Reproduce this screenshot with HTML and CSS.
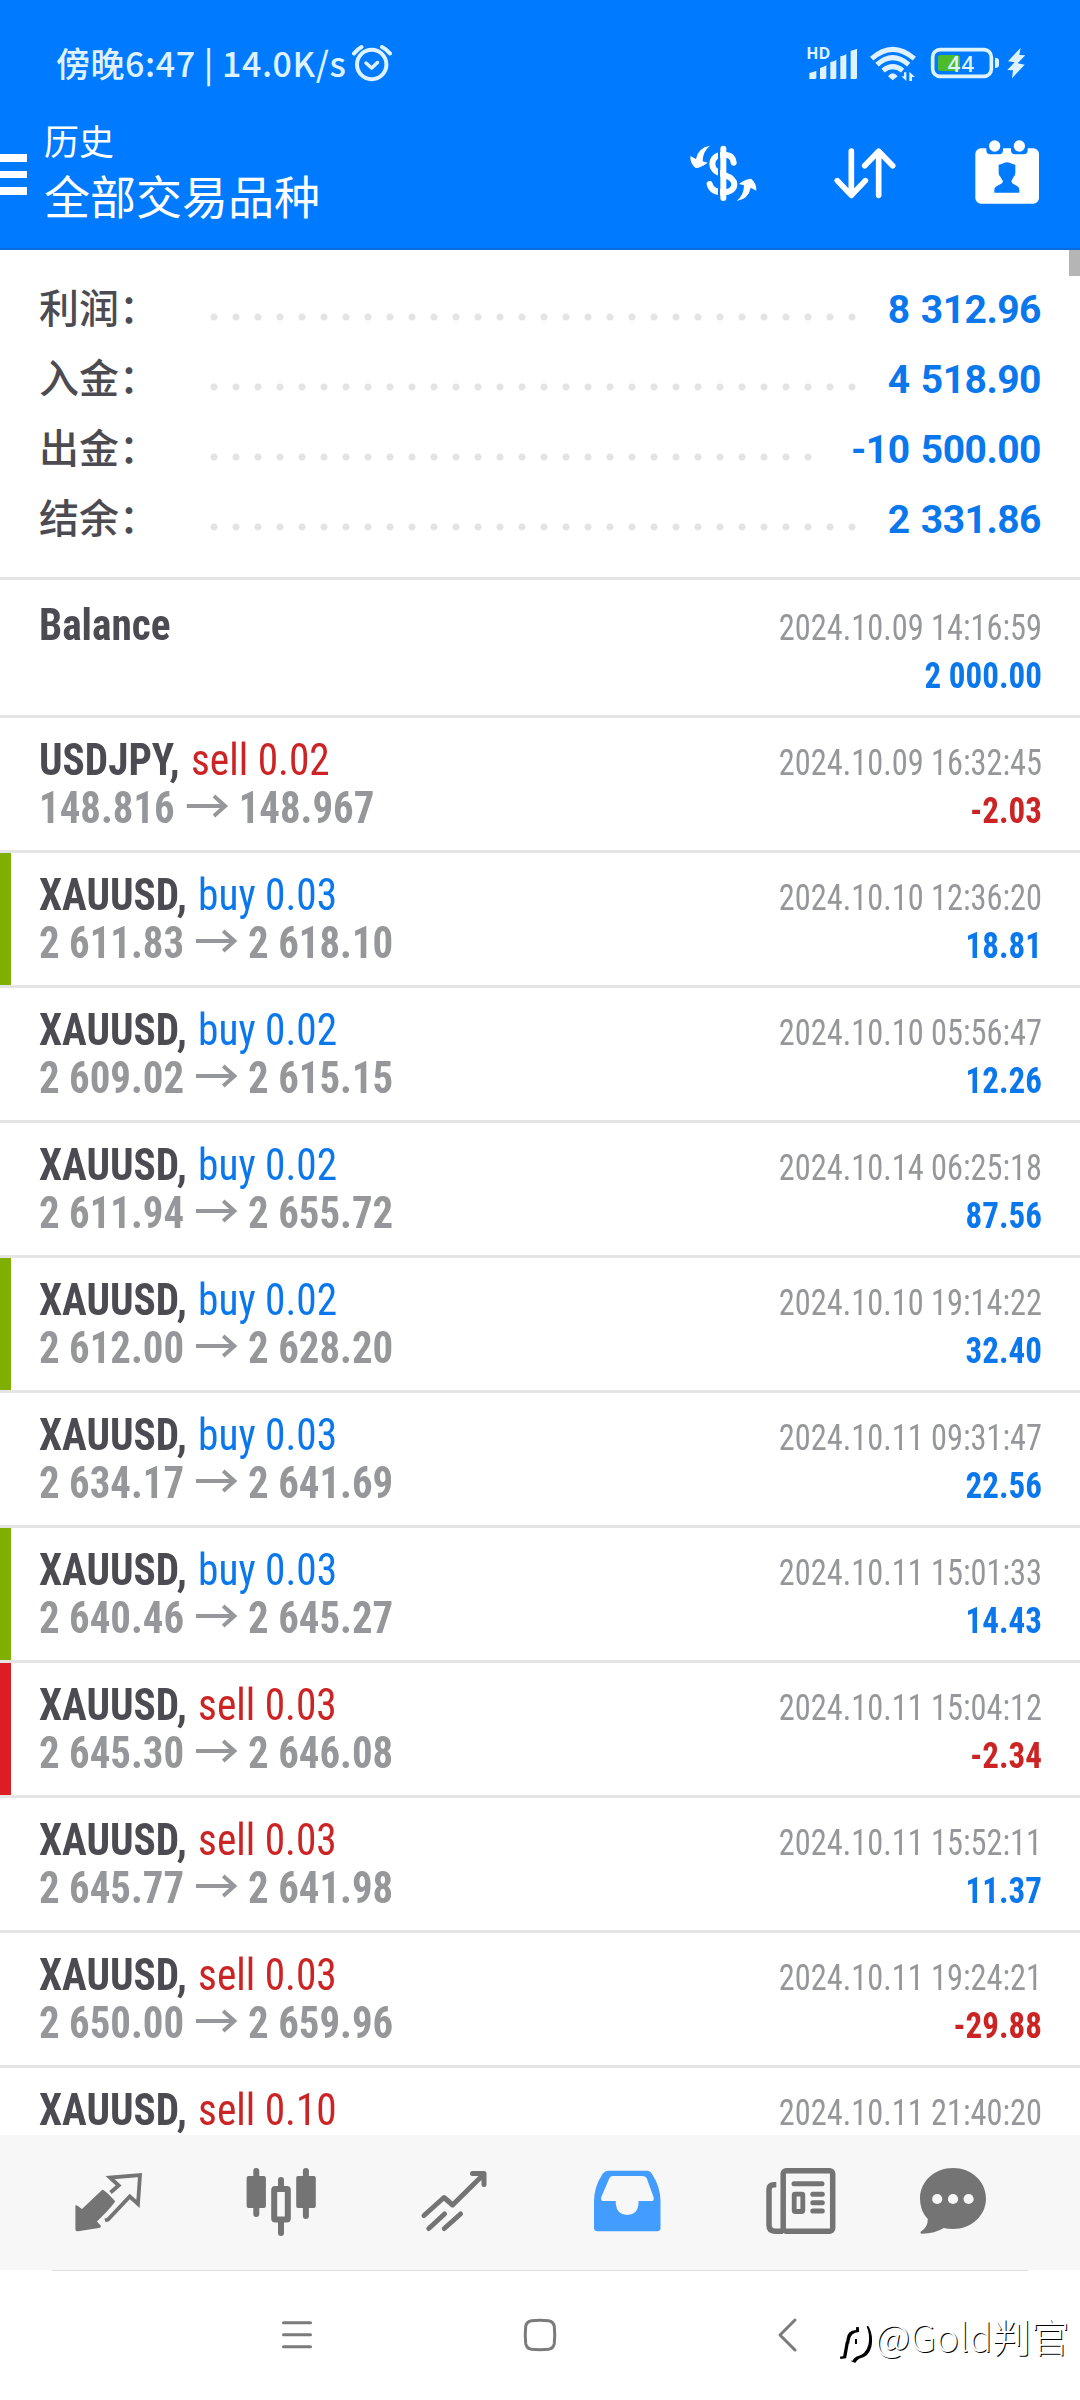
FILE: index.html
```html
<!DOCTYPE html>
<html lang="zh-CN">
<head>
<meta charset="utf-8">
<title>历史</title>
<link rel="stylesheet" href="styles.css">
</head>
<body>
<svg width="0" height="0" class="defs">
  <symbol id="arrow" viewBox="0 0 45 24">
    <path d="M0 12H42M29.500 2L41.500 12L29.500 22" fill="none" stroke="currentColor" stroke-width="4.200"/>
  </symbol>
</svg>

<header class="header">
  <div class="status">
    <div class="status-left">
      <span class="clock">傍晚6:47 | 14.0K/s</span>
      <svg class="alarm" viewBox="0 0 40 38" fill="none" stroke="currentColor" stroke-width="4">
        <circle cx="19.700" cy="20.500" r="14.700"/>
        <path d="M14 19L19.700 24L25.500 18.500" stroke-width="3.500" stroke-linecap="round" stroke-linejoin="round"/>
        <path d="M2 9.500Q5 5.500 9.500 3M30 3Q35 5.500 38 9.500" stroke-linecap="round"/>
      </svg>
    </div>
    <svg class="status-right" viewBox="438 126 660 123" fill="currentColor">
      <text x="439" y="177" class="hd">HD</text>
      <path d="M448 237V219Q460 216 469 212V234L466 237ZM480 237V204Q491 201 499 196V234L496 237ZM511 237V186Q522 184 529 179V234L526 237ZM541 237V169Q552 167 559 162V234L556 237ZM572 237V152Q582 150 591 146V234L588 237Z"/>
      <g fill="none" stroke="currentColor" stroke-width="15">
        <path d="M635 176Q698 120 763 176"/>
        <path d="M651 194Q698 152 746 194"/>
        <path d="M669 212Q698 188 728 212"/>
      </g>
      <path d="M684 229Q698 210 713 229L698 241ZM739 217V243L724 229H732V217ZM748 243V215L765 231H756V243Z"/>
      <rect x="818" y="149" width="176" height="80" rx="22" fill="none" stroke="currentColor" stroke-width="11"/>
      <path d="M1005 173Q1017 173 1017 182V195Q1017 204 1005 204Z"/>
      <rect x="834" y="165" width="66" height="48" rx="8" fill="#4cbb2c"/>
      <text x="863" y="215" class="charge">44</text>
      <path d="M1082 143L1044 184L1064 187L1042 210L1059 211L1056 235L1094 194L1073 190L1096 166L1078 165Z"/>
    </svg>
  </div>
  <div class="appbar">
    <div class="menu"><i></i><i></i><i></i></div>
    <div class="titles">
      <div class="title">历史</div>
      <div class="subtitle">全部交易品种</div>
    </div>
    <div class="actions">
      <svg viewBox="80 410 210 210" fill="none" stroke="#fff">
        <path d="M217 487C214 464 200 463 186 463C166 463 153 474 153 491C153 511 172 518 190 524C210 531 219 540 219 552C219 568 205 576 186 576C165 576 149 569 145 551" stroke-width="18" stroke-linecap="round"/>
        <path d="M173 440V600" stroke="#007aff" stroke-width="6"/>
        <path d="M186 445V593" stroke-width="18" stroke-linecap="round"/>
        <g fill="#fff" stroke="none">
          <path id="swoosh" d="M146 436Q110 442 104 476L87 467Q86 490 103 503Q120 502 139 487L124 483Q124 454 146 436Z"/>
          <use href="#swoosh" transform="rotate(180 186 519)"/>
        </g>
      </svg>
      <svg viewBox="510 410 210 210" fill="none" stroke="#fff" stroke-width="17" stroke-linecap="round" stroke-linejoin="round">
        <path d="M574 452V584M532 541L574 585L616 541M656 585V454M614 496L656 453L698 496"/>
      </svg>
      <svg viewBox="935 410 210 210">
        <rect x="945" y="444" width="191" height="166" rx="17" fill="#fff"/>
        <path d="M978 440H1028V450Q1028 462 1016 462H990Q978 462 978 450ZM1052 440H1102V450Q1102 462 1090 462H1064Q1052 462 1052 450Z" fill="#007aff"/>
        <circle cx="1003" cy="437" r="17" fill="#fff"/>
        <circle cx="1077" cy="437" r="17" fill="#fff"/>
        <path d="M1024 491Q1040 481 1056 491L1065 493V518Q1065 524 1060 529L1053 543Q1054 550 1066 555Q1077 560 1077 568V577H1002V568Q1002 560 1014 555Q1027 550 1028 543L1020 529Q1015 524 1015 518V493Z" fill="#007aff"/>
      </svg>
    </div>
  </div>
</header>

<main class="history">
  <div class="scrollbar"></div>
  <section class="summary">
    <div class="sum"><span class="label">利润：</span><span class="dots"></span><b>8 312.96</b></div>
    <div class="sum"><span class="label">入金：</span><span class="dots"></span><b>4 518.90</b></div>
    <div class="sum"><span class="label">出金：</span><span class="dots"></span><b>-10 500.00</b></div>
    <div class="sum"><span class="label">结余：</span><span class="dots"></span><b>2 331.86</b></div>
  </section>

  <div class="deal balance">
    <div class="info"><div class="name"><b>Balance</b></div></div>
    <div class="result"><div class="date">2024.10.09 14:16:59</div><div class="amount up">2 000.00</div></div>
  </div>
  <div class="deal">
    <div class="info"><div class="name"><b>USDJPY,</b> <span class="down">sell 0.02</span></div><div class="prices">148.816<svg class="to"><use href="#arrow"/></svg>148.967</div></div>
    <div class="result"><div class="date">2024.10.09 16:32:45</div><div class="amount down">-2.03</div></div>
  </div>
  <div class="deal tp">
    <div class="info"><div class="name"><b>XAUUSD,</b> <span class="up">buy 0.03</span></div><div class="prices">2 611.83<svg class="to"><use href="#arrow"/></svg>2 618.10</div></div>
    <div class="result"><div class="date">2024.10.10 12:36:20</div><div class="amount up">18.81</div></div>
  </div>
  <div class="deal">
    <div class="info"><div class="name"><b>XAUUSD,</b> <span class="up">buy 0.02</span></div><div class="prices">2 609.02<svg class="to"><use href="#arrow"/></svg>2 615.15</div></div>
    <div class="result"><div class="date">2024.10.10 05:56:47</div><div class="amount up">12.26</div></div>
  </div>
  <div class="deal">
    <div class="info"><div class="name"><b>XAUUSD,</b> <span class="up">buy 0.02</span></div><div class="prices">2 611.94<svg class="to"><use href="#arrow"/></svg>2 655.72</div></div>
    <div class="result"><div class="date">2024.10.14 06:25:18</div><div class="amount up">87.56</div></div>
  </div>
  <div class="deal tp">
    <div class="info"><div class="name"><b>XAUUSD,</b> <span class="up">buy 0.02</span></div><div class="prices">2 612.00<svg class="to"><use href="#arrow"/></svg>2 628.20</div></div>
    <div class="result"><div class="date">2024.10.10 19:14:22</div><div class="amount up">32.40</div></div>
  </div>
  <div class="deal">
    <div class="info"><div class="name"><b>XAUUSD,</b> <span class="up">buy 0.03</span></div><div class="prices">2 634.17<svg class="to"><use href="#arrow"/></svg>2 641.69</div></div>
    <div class="result"><div class="date">2024.10.11 09:31:47</div><div class="amount up">22.56</div></div>
  </div>
  <div class="deal tp">
    <div class="info"><div class="name"><b>XAUUSD,</b> <span class="up">buy 0.03</span></div><div class="prices">2 640.46<svg class="to"><use href="#arrow"/></svg>2 645.27</div></div>
    <div class="result"><div class="date">2024.10.11 15:01:33</div><div class="amount up">14.43</div></div>
  </div>
  <div class="deal sl">
    <div class="info"><div class="name"><b>XAUUSD,</b> <span class="down">sell 0.03</span></div><div class="prices">2 645.30<svg class="to"><use href="#arrow"/></svg>2 646.08</div></div>
    <div class="result"><div class="date">2024.10.11 15:04:12</div><div class="amount down">-2.34</div></div>
  </div>
  <div class="deal">
    <div class="info"><div class="name"><b>XAUUSD,</b> <span class="down">sell 0.03</span></div><div class="prices">2 645.77<svg class="to"><use href="#arrow"/></svg>2 641.98</div></div>
    <div class="result"><div class="date">2024.10.11 15:52:11</div><div class="amount up">11.37</div></div>
  </div>
  <div class="deal">
    <div class="info"><div class="name"><b>XAUUSD,</b> <span class="down">sell 0.03</span></div><div class="prices">2 650.00<svg class="to"><use href="#arrow"/></svg>2 659.96</div></div>
    <div class="result"><div class="date">2024.10.11 19:24:21</div><div class="amount down">-29.88</div></div>
  </div>
  <div class="deal">
    <div class="info"><div class="name"><b>XAUUSD,</b> <span class="down">sell 0.10</span></div></div>
    <div class="result"><div class="date">2024.10.11 21:40:20</div></div>
  </div>
</main>

<nav class="tabs">
  <svg viewBox="0 0 173 135">
    <path d="M53.400 70.500Q54 69 60 74L80.300 54.700Q82 54 93 66Q93.500 68 75 86.500L79 91Q79 92.500 77 93L56 96.300Q53.400 96.300 53.400 94Z" fill="currentColor"/>
    <path d="M88.500 57.500L96.700 50.500L88 42.500L118 40L116 69L107.800 61.500L86 84.500L83 85.500" fill="none" stroke="currentColor" stroke-width="3.800"/>
  </svg>
  <svg viewBox="0 0 173 135" stroke="currentColor" stroke-linecap="round" stroke-width="6">
    <g fill="currentColor" stroke="none">
      <rect x="51.600" y="41" width="19.300" height="32" rx="2"/>
      <rect x="101.200" y="41" width="19.600" height="32" rx="2"/>
    </g>
    <path d="M61.300 36V79M110.900 36V81M86 45V53M86 85V98"/>
    <rect x="79.200" y="54" width="13.600" height="30.500" rx="1" fill="#f7f7f7"/>
  </svg>
  <svg viewBox="0 0 173 135" fill="none" stroke="currentColor" stroke-linecap="round" stroke-linejoin="round" stroke-width="5">
    <path d="M56 80.500L76 62.500L84.600 70L115.500 39.500M104.500 38.500H116V49.500M60.800 93.500L76.500 79M76.300 93.500L92.500 79"/>
  </svg>
  <svg viewBox="0 0 173 135" class="active">
    <path fill="currentColor" fill-rule="evenodd" d="M67 35.700H106Q109 35.700 111 39Q119.500 52 119.500 66V93Q119.500 96.300 116 96.300H56.500Q53 96.300 53 93V66Q53 52 61.500 39Q64 35.700 67 35.700ZM72 41Q69 41 68 44L60.300 62Q59.500 66 62 66H74.800V69Q76 80 86.200 80Q96.500 80 97.500 69V66H111Q113.500 66 112.500 62L106 44Q105 41 101 41Z"/>
  </svg>
  <svg viewBox="0 0 173 135" fill="none" stroke="currentColor" stroke-width="5.500">
    <rect x="69.200" y="35.800" width="49.500" height="60.400" rx="3"/>
    <path d="M62.300 49.700H60Q55 49.700 55 54.500V90Q55 96 61 96.200H69"/>
    <path d="M80 48.700H108M98.800 59.300H108.300M98.800 67.700H108.300M98.800 76H108.300" stroke-width="5" stroke-linecap="round"/>
    <rect x="80.200" y="59.200" width="8.600" height="17.300" rx="1" stroke-width="4.800"/>
  </svg>
  <svg viewBox="0 0 173 135">
    <path fill="currentColor" d="M66 33C84 33 99 46 99 63.500C99 81 84 94 66 94Q61 94 56.800 93Q48 98.500 35 98.700Q32.500 98.500 34 96.500Q41 92 40.800 84Q33 76 33 63.500C33 46 48 33 66 33Z"/>
    <g fill="#f7f7f7"><circle cx="50.200" cy="64" r="5.100"/><circle cx="66" cy="64" r="5.100"/><circle cx="81.600" cy="64" r="5.100"/></g>
  </svg>
</nav>

<footer class="sysnav">
  <div class="divider"></div>
  <svg viewBox="0 0 36 36"><path d="M4.500 5.700H31.500M4.500 17.700H31.500M4.500 29.700H31.500"/></svg>
  <svg viewBox="0 0 36 36"><path d="M9.500 3.700Q18 2.800 26.500 3.700Q31.500 4.500 32.300 9.500Q33.200 18 32.300 26.500Q31.500 31.500 26.500 32.300Q18 33.200 9.500 32.300Q4.500 31.500 3.700 26.500Q2.800 18 3.700 9.500Q4.500 4.500 9.500 3.700Z"/></svg>
  <svg viewBox="0 0 36 36"><path d="M30 3L15 18L30 33" stroke-linejoin="round"/></svg>
  <div class="watermark">
    <svg viewBox="0 0 36 42">
      <path d="M3 33.500L7 33L9.500 19M4.500 18H10Q11 7 22 6.500M18 18.500H20M29 4Q34 12 32 23Q30 32 21 33.500Q18 35 16 39"/>
    </svg><span>@Gold判官</span>
  </div>
</footer>
</body>
</html>
```
FILE: styles.css
```css
* { box-sizing: border-box; }

body {
  margin: 0;
  width: 1080px;
  height: 2400px;
  overflow: hidden;
  display: flex;
  flex-direction: column;
  background: #fff;
  font-family: Roboto, "Noto Sans CJK SC", sans-serif;
  color: #4c4b52;
}

.defs { position: absolute; }

/* Header */
.header {
  flex: none;
  height: 250px;
  background: #007aff;
  border-bottom: 2px solid #0c6bda;
  color: #fff;
}

.status {
  height: 116px;
  padding: 42px 54px 0 56px;
  display: flex;
  justify-content: space-between;
  align-items: flex-start;
  color: #dff2ff;
}
.status-left { display: flex; }
.clock {
  font: 500 34px/42px "Noto Sans CJK SC", sans-serif;
  letter-spacing: 0.550px;
  white-space: pre;
}
.alarm { width: 40px; height: 38px; margin: 2px 0 0 6px; }
.status-right { width: 220px; height: 41px; }
.hd { font: 700 48px "Open Sans", sans-serif; }
.charge { font: 600 66px "Open Sans", sans-serif; letter-spacing: 4px; }

.appbar { display: flex; height: 132px; }
.menu {
  width: 27px;
  padding-top: 38px;
  display: flex;
  flex-direction: column;
  gap: 9px;
}
.menu i { height: 7.500px; background: #fff; }
.titles {
  flex: 1;
  padding-left: 17px;
  font-family: "Noto Sans CJK SC", sans-serif;
}
.title { font-size: 35px; line-height: 48px; }
.subtitle { font-size: 46px; line-height: 61px; }
.actions { display: flex; gap: 72px; padding: 21px 38px 0 0; }
.actions svg { width: 70px; height: 70px; }

/* Account summary */
.history { flex: 1; min-height: 0; overflow: hidden; position: relative; }
.scrollbar {
  position: absolute;
  right: 0;
  top: 0;
  width: 11px;
  height: 26px;
  background: #b5b5b5;
}
.summary {
  height: 330px;
  padding: 24px 39px 0;
  border-bottom: 3px solid #e5e5e5;
}
.sum { display: flex; align-items: center; height: 70px; }
.label {
  width: 164px;
  height: 70px;
  font: 500 40px/64px "Noto Sans CJK SC", sans-serif;
}
.dots {
  flex: 1;
  height: 8px;
  margin: 15px 29px 0 0;
  background: radial-gradient(circle at center, #e4e4e4 3.200px, transparent 3.900px) 0 0 / 22px 8px repeat-x;
}
.sum b {
  height: 70px;
  font: 700 39px/72px Roboto, sans-serif;
  letter-spacing: -0.500px;
  word-spacing: 2px;
  color: #0a78ec;
}

/* Deals */
.deal {
  height: 135px;
  padding: 18px 38px 0 39px;
  display: flex;
  justify-content: space-between;
  border-bottom: 3px solid #e5e5e5;
  font: 44px/48px "Roboto Condensed", Roboto, sans-serif;
  white-space: nowrap;
}
.balance { height: 138px; padding-top: 21px; }
.tp { background: linear-gradient(#7fb000, #7fb000) 0 0 / 11px 100% no-repeat; }
.sl { background: linear-gradient(#de1c24, #de1c24) 0 0 / 11px 100% no-repeat; }

/* Text is set narrower than the condensed face */
.name, .prices { transform-origin: 0 50%; }
.date, .amount { transform-origin: 100% 50%; }
.name { transform: scaleX(0.938); }
.name b { font-weight: 700; }
.name span { margin-left: 2px; }
.prices {
  display: flex;
  font-weight: 700;
  color: #96979b;
  transform: scaleX(0.928);
}
.to { width: 45px; height: 24px; margin: 10px 11px 0 13px; }
.result { padding-top: 3px; font-size: 36px; text-align: right; }
.date { color: #96979b; transform: scaleX(0.898); }
.amount { font-weight: 700; transform: scaleX(0.917); }
.up { color: #0a78ec; }
.down { color: #cc2424; }

/* Bottom tabs */
.tabs {
  flex: none;
  height: 135px;
  padding-left: 22px;
  display: flex;
  background: #f7f7f7;
  color: #747474;
}
.tabs svg { width: 173px; height: 135px; }
.tabs .active { color: #439cff; }

/* System navigation */
.sysnav {
  flex: none;
  height: 130px;
  position: relative;
  display: grid;
  grid-template: 1px 128px / repeat(3, 243px);
  justify-content: center;
  justify-items: center;
  align-items: center;
}
.divider { grid-column: 1 / -1; width: 976px; height: 1px; background: #dedede; }
.sysnav > svg {
  width: 36px;
  height: 36px;
  fill: none;
  stroke: #7b7b7b;
  stroke-width: 3;
  stroke-linecap: round;
}
.watermark {
  position: absolute;
  left: 834px;
  top: 38px;
  display: flex;
  color: #fff;
  font: 300 38.500px/54px "Noto Sans CJK SC", sans-serif;
  white-space: nowrap;
  text-shadow: 1px 1px 0 #000;
}
.watermark svg {
  width: 36px;
  height: 42px;
  margin: 13px 5px 0 0;
  fill: none;
  stroke: #fff;
  stroke-width: 5;
  filter: drop-shadow(3px 2px 0 #000);
}
```
